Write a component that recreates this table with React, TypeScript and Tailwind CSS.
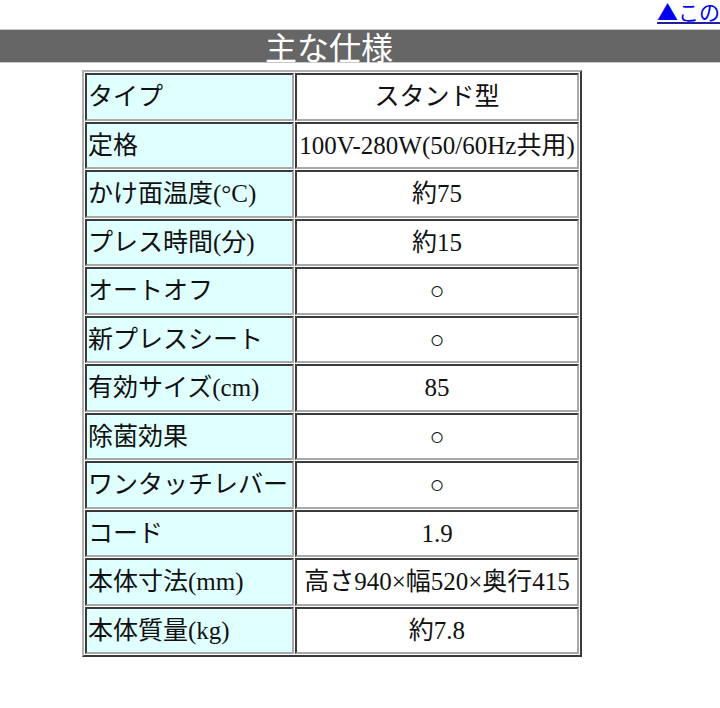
import React from "react";

const rows: [string, string][] = [
  ["タイプ", "スタンド型"],
  ["定格", "100V-280W(50/60Hz共用)"],
  ["かけ面温度(°C)", "約75"],
  ["プレス時間(分)", "約15"],
  ["オートオフ", "○"],
  ["新プレスシート", "○"],
  ["有効サイズ(cm)", "85"],
  ["除菌効果", "○"],
  ["ワンタッチレバー", "○"],
  ["コード", "1.9"],
  ["本体寸法(mm)", "高さ940×幅520×奥行415"],
  ["本体質量(kg)", "約7.8"],
];

export default function App() {
  return (
    <div
      className="w-[720px] h-[708px] bg-white overflow-hidden text-[#111]"
      style={{ fontFamily: '"Liberation Serif", "Noto Sans CJK JP", serif' }}
    >
      <div className="h-[29px] w-[720px] pl-[657px] whitespace-nowrap overflow-hidden">
        <span
          className="text-[21px] leading-[22px] text-[#0000ee] underline decoration-[#2020a0]"
          style={{ fontFamily: '"Noto Sans CJK JP", sans-serif' }}
        >
          ▲この
        </span>
      </div>
      <div className="h-[34px] bg-[#666666] border-t border-b border-[#c8c8c8] flex items-center pl-[265px]">
        <span
          className="text-[32px] leading-none text-white"
          style={{ fontFamily: '"Noto Sans CJK JP", sans-serif' }}
        >
          主な仕様
        </span>
      </div>
      <table className="ml-[82px] mt-[7px] w-[500px] border-separate border-spacing-[1px] border-2 border-t-[#b0b0b0] border-l-[#b0b0b0] border-b-[#3a3a3a] border-r-[#3a3a3a]">
        <tbody>
          {rows.map(([k, v]) => (
            <tr key={k}>
              <td className="h-[47.5px] w-[209px] bg-[#e0ffff] border-2 border-t-[#3a3a3a] border-l-[#3a3a3a] border-b-[#a8a8a8] border-r-[#a8a8a8] pl-[1px] pr-0 py-0 text-[25px] leading-none whitespace-nowrap">
                {k}
              </td>
              <td className="h-[47.5px] bg-white border-2 border-t-[#3a3a3a] border-l-[#3a3a3a] border-b-[#a8a8a8] border-r-[#a8a8a8] px-0 py-0 text-center text-[25px] leading-none whitespace-nowrap">
                {v}
              </td>
            </tr>
          ))}
        </tbody>
      </table>
    </div>
  );
}
